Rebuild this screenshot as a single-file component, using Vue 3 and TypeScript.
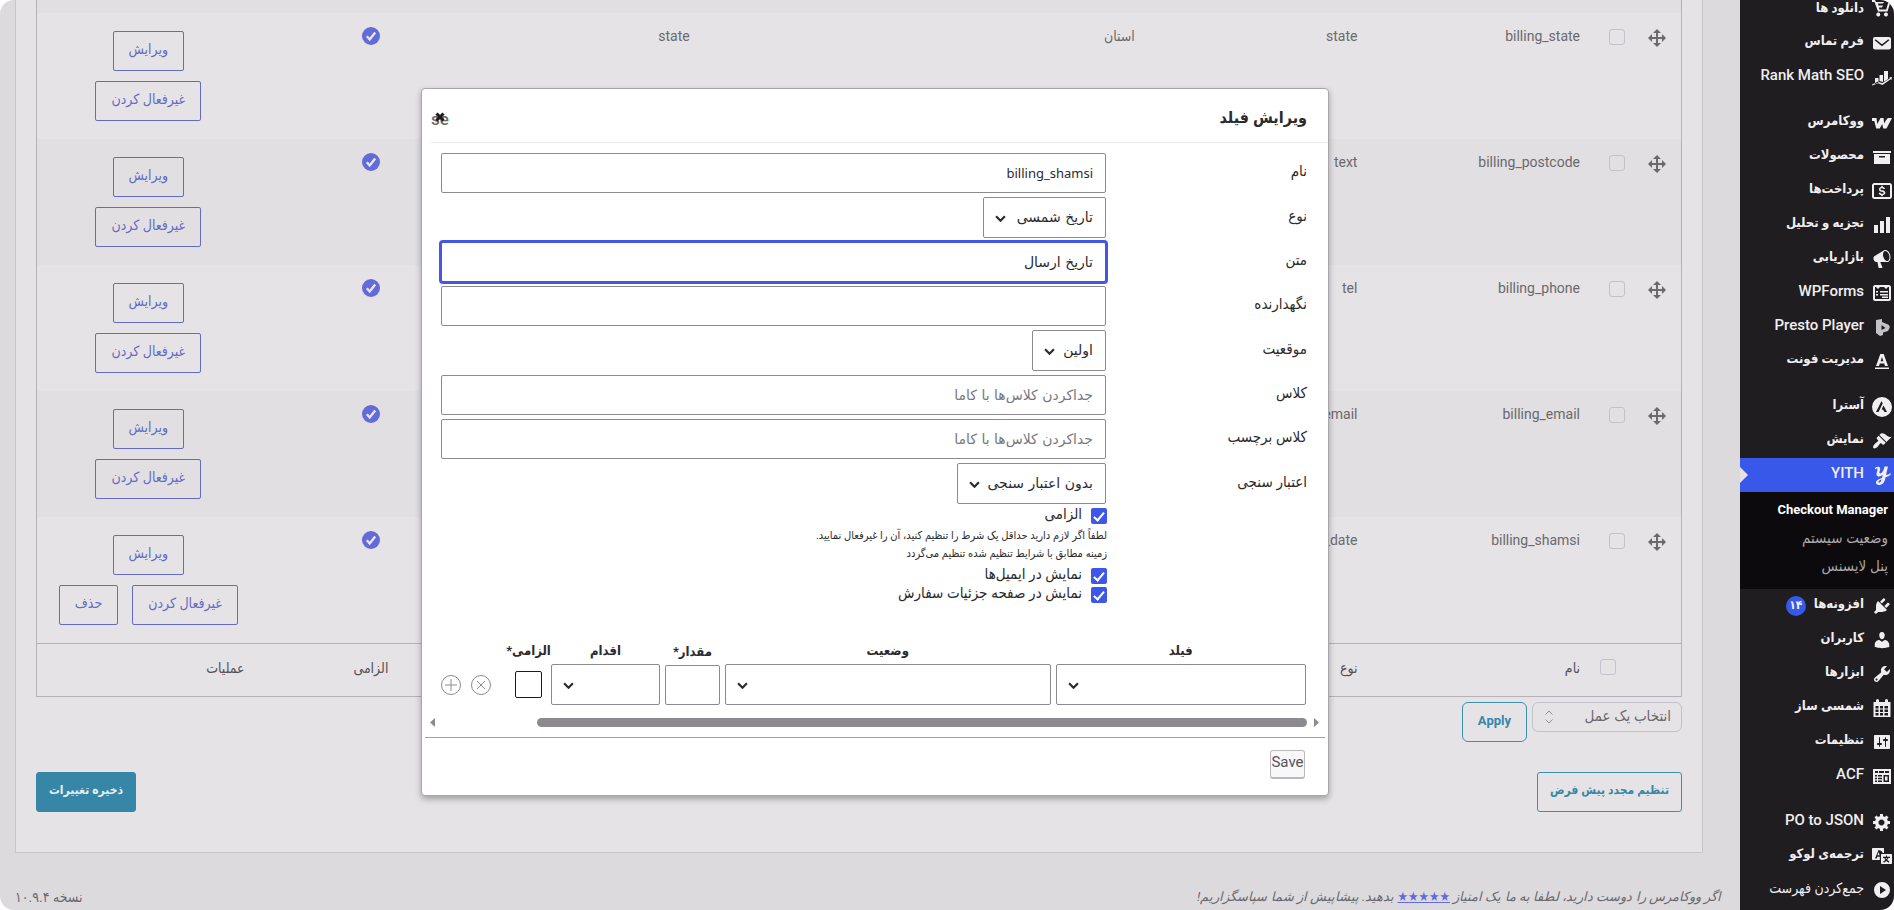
<script setup lang="ts">
import { ref } from 'vue'

interface MenuItem {
  label: string
  icon: string
  gapBefore?: boolean
  active?: boolean
  latin?: boolean
  badge?: string
}

interface FieldRow {
  name: string
  type: string
  label?: string
  className?: string
  removable?: boolean
}

const menuTop: MenuItem[] = [
  { label: 'دانلود ها', icon: 'cart' },
  { label: 'فرم تماس', icon: 'mail' },
  { label: 'Rank Math SEO', icon: 'rank', latin: true },
  { label: 'ووکامرس', icon: 'woo', gapBefore: true },
  { label: 'محصولات', icon: 'archive' },
  { label: 'پرداخت‌ها', icon: 'money' },
  { label: 'تجزیه و تحلیل', icon: 'bars' },
  { label: 'بازاریابی', icon: 'megaphone' },
  { label: 'WPForms', icon: 'form', latin: true },
  { label: 'Presto Player', icon: 'presto', latin: true },
  { label: 'مدیریت فونت', icon: 'font' },
  { label: 'آسترا', icon: 'astra', gapBefore: true },
  { label: 'نمایش', icon: 'brush' },
  { label: 'YITH', icon: 'yith', active: true, latin: true },
]

const subMenu: string[] = ['Checkout Manager', 'وضعیت سیستم', 'پنل لایسنس']

const menuBottom: MenuItem[] = [
  { label: 'افزونه‌ها', icon: 'plug', badge: '۱۴' },
  { label: 'کاربران', icon: 'user' },
  { label: 'ابزارها', icon: 'tools' },
  { label: 'شمسی ساز', icon: 'calendar' },
  { label: 'تنظیمات', icon: 'sliders' },
  { label: 'ACF', icon: 'acf', latin: true },
  { label: 'PO to JSON', icon: 'gear', gapBefore: true, latin: true },
  { label: 'ترجمه‌ی لوکو', icon: 'translate' },
  { label: 'جمع‌کردن فهرست', icon: 'play' },
]

/* 20x20 outlines; the even-odd rule cuts the inner shapes out */
const icons: Record<string, string> = {
  cart: 'M0 1h3l1 2h8l-1 1.500H6l.4 2H11L10 8.500H7l.4 2h6.800L17 1h3v2h-1.500L15.500 12.500H6L2.500 3H0zM5.800 13.500a2 2 0 1 1 0 3.900 2 2 0 0 1 0-3.900zM13.500 13.500a2 2 0 1 1 0 3.900 2 2 0 0 1 0-3.900z',
  mail: 'M3 4h14c1.100 0 2 .9 2 2v8.500c0 1.100-.9 2-2 2H3c-1.100 0-2-.9-2-2V6c0-1.100.9-2 2-2zM3.600 6.200l-1 1.100L10 13.300l7.400-6-1-1.100L10 11.300z',
  rank: 'M3 11h3.500v4.500L3 17zM7.500 8H11v7l-3.500-1zM12 4h4v8l-4 2.500zM0 17.500l6-3 4 1.700 8-5-1-.7 3-.5-.6 3-.8-.8-8.200 5.800-4.200-1.700L0 18.500z',
  woo: 'M0 5h4.500l.8 6L8.500 5h3l.7 5.500C13.500 8 14.500 6 16 5h4l-5.500 10.500h-3.300l-1-4.500-2.500 4.500H4.200L2.300 8H0z',
  archive: 'M1 4h18v2H1zM2 7h16v10H2zM7 9v1.500h6V9z',
  money: 'M2.500 2h15C19 2 20 3 20 4.500v11c0 1.500-1 2.500-2.500 2.500h-15C1 18 0 17 0 15.500v-11C0 3 1 2 2.500 2zM2 4v12h16V4zM9.200 4.800h1.600v1.100c1.200.2 2 .8 2.300 1.900l-1.500.5c-.3-.7-.8-1-1.600-1-1 0-1.500.4-1.500.9 0 .7.600.8 1.900 1.100 1.900.4 2.900 1.100 2.900 2.500 0 1.300-.9 2.100-2.500 2.400v1.100H9.200v-1.100c-1.400-.3-2.300-1-2.600-2.200l1.600-.5c.3.900.9 1.300 1.900 1.300s1.500-.3 1.500-.9c0-.7-.6-.8-1.900-1.100C7.800 10.400 7 9.700 7 8.500c0-1.300.8-2.200 2.200-2.500z',
  bars: 'M2 10h4v8H2zM8 6h4v12H8zM14 2h4v16h-4z',
  megaphone:
    'M18.150 5.940c.46 1.620.38 3.220-.02 4.480-.42 1.280-1.260 2.180-2.300 2.480-.16.060-.26.060-.4.060-.06.020-.12.020-.18.020-.06.020-.14.020-.22.020h-6.800l2.220 5.500c.02.140-.06.260-.14.340-.08.100-.24.160-.34.160H6.950c-.1 0-.26-.06-.34-.16-.08-.08-.16-.2-.14-.34l-1-5.500H4.250l-.02-.02c-.5.060-1.080-.18-1.540-.62s-.88-1.080-1.060-1.880c-.24-.8-.2-1.560-.02-2.200.18-.62.580-1.080 1.060-1.300l.02-.02 9-5.400c.1-.06.180-.1.240-.16.060-.04.140-.08.240-.12.160-.08.280-.12.500-.18 1.040-.3 2.240.1 3.220.98s1.840 2.240 2.260 3.860zm-2.580 5.980h-.02c.4-.1.740-.34 1.040-.7.580-.7.860-1.760.860-3.040 0-.64-.1-1.300-.28-1.980-.34-1.360-1.020-2.500-1.780-3.240s-1.680-1.100-2.460-.88c-.82.220-1.400.960-1.700 2-.32 1.040-.28 2.360.06 3.720.38 1.360 1 2.500 1.800 3.240.78.740 1.620 1.100 2.480.88z',
  form: 'M3 2h14c1 0 2 1 2 2v12c0 1-1 2-2 2H3c-1 0-2-1-2-2V4c0-1 1-2 2-2zM3 4v12h14V4h-1l-2 2-2-2h-4L6 6 4 4zM4 8h2v1.500H4zM8 8h8v1.500H8zM4 11h2v1.500H4zM8 11h8v1.500H8zM10 13.500h6V15h-6z',
  presto: 'M4 3l6-1v3l6 2.500c1.500.8 2 2 1.500 3.500L16 14l-5 1.500V18l-3 1-4-3zM9.500 8v5l4-2z',
  font: 'M8.300 3h3.400l4.300 12h-3l-.8-2.500H7.800L7 15H4zM10 6l-1.400 4.300h2.800zM3 16.500h14V18H3z',
  astra: 'M10 0a10 10 0 1 1 0 20 10 10 0 0 1 0-20zM9.500 4L4 15h2.500l4.200-8.500zM11.500 8.500l-1.800 3.700 1.600.8L12.500 15H15z',
  brush:
    'M14.480 11.060L7.410 3.990l1.500-1.500c.5-.56 2.300-.47 3.510.32 1.210.8 1.430 1.280 2.910 2.100 1.180.64 2.450 1.260 4.450.85zm-.71.710L6.700 4.700 4.930 6.470c-.39.390-.39 1.020 0 1.410l1.060 1.060c.39.390.390 1.030 0 1.420-.6.600-1.430 1.110-2.210 1.690-.35.260-.7.530-1.010.840C1.430 14.230.400 16.080 1.400 17.070c.99 1 2.840-.03 4.180-1.360.31-.31.580-.66.850-1.020.57-.78 1.080-1.610 1.690-2.210.39-.39 1.020-.39 1.410 0l1.060 1.060c.39.390 1.020.390 1.410 0z',
  yith: 'M3 3c2-2 5-1.500 5.200.5C8.400 5 7 7 7.500 8c.5 1.200 3-.5 4-3l1-3.500h3.500L14 10l3-.8 1.500-1.200.3 1.500-2.300 1.800-3 1C13 16.500 11 20 7.500 20 4 20 3 17.500 5 15.500c1.300-1.200 3-2 5-2.500l.7-3.200c-2 2.200-5.700 2.500-6.200-.3C4.200 7.500 6 5 5.500 3.800 5 3 4 3.500 3 4.500zM9.500 14.500c-2 .7-3.300 1.700-3 2.800.3 1 2.300.5 3-2.800z',
  plug: 'M13.110 4.360L9.870 7.600 8 5.730l3.240-3.240c.35-.34 1.050-.2 1.560.32.520.51.660 1.210.31 1.550zm-8 1.770l.91-1.120 9.010 9.010-1.190.840c-.71.710-2.630 1.160-3.820 1.160H6.140L4.900 17.260c-.59.590-1.540.590-2.120 0-.59-.58-.59-1.530 0-2.120l1.240-1.240v-3.880c0-1.130.400-3.190 1.090-3.890zm7.260 3.970l3.240-3.240c.34-.35 1.040-.21 1.550.31.520.51.660 1.210.31 1.550l-3.240 3.250z',
  user: 'M10 9.250c-2.270 0-2.730-3.440-2.730-3.440C7 4.020 7.820 2 9.970 2c2.160 0 2.980 2.020 2.710 3.810 0 0-.41 3.440-2.680 3.440zm0 2.570L12.720 10c2.390 0 4.520 2.330 4.520 4.530v2.490s-3.650 1.130-7.240 1.130c-3.650 0-7.240-1.130-7.240-1.130v-2.490c0-2.250 1.940-4.480 4.470-4.480z',
  tools: 'M16.680 9.770c-1.340 1.340-3.300 1.670-4.950.99l-5.410 6.520c-.99.990-2.590.990-3.580 0s-.99-2.590 0-3.570l6.520-5.420c-.68-1.650-.35-3.610.99-4.950 1.280-1.280 3.120-1.620 4.720-1.060l-2.890 2.890 2.820 2.820 2.860-2.870c.53 1.580.18 3.390-1.080 4.650zM3.810 16.210c.4.390 1.040.390 1.430 0 .4-.4.400-1.040 0-1.430-.39-.4-1.030-.4-1.430 0-.39.390-.39 1.030 0 1.430z',
  calendar:
    'M2 4h2V2.500a1.500 1.500 0 0 1 3 0V4h6V2.500a1.500 1.500 0 0 1 3 0V4h2.500v15h-17V4zM3.500 8v2.500h3V8zM8 8v2.500h3V8zM12.500 8v2.500h3.500V8zM3.500 11.500V14h3v-2.500zM8 11.500V14h3v-2.500zM12.500 11.500V14H16v-2.500zM3.500 15v2.500h3V15zM8 15v2.500h3V15zM12.500 15v2.500H16V15z',
  sliders:
    'M18 16V4c0-.55-.45-1-1-1H3c-.55 0-1 .45-1 1v12c0 .55.450 1 1 1h14c.55 0 1-.45 1-1zM8 11h1c.55 0 1 .45 1 1s-.45 1-1 1H8v1.500c0 .28-.22.500-.5.500s-.5-.22-.5-.5V13H6c-.55 0-1-.45-1-1s.45-1 1-1h1V5.500c0-.28.220-.5.500-.5s.5.220.5.500V11zm5-2h-1c-.55 0-1-.45-1-1s.45-1 1-1h1V5.500c0-.28.220-.5.500-.5s.5.220.5.500V7h1c.55 0 1 .45 1 1s-.45 1-1 1h-1v5.500c0 .28-.22.500-.5.500s-.5-.22-.5-.5V9z',
  acf: 'M1 3h18v15H1zM3 5v2h3V5zM7 5v2h5V5zM13 5v2h4V5zM3 9v1.500h2V9zM6 9v1.500h4V9zM3 11.800v1.500h2v-1.500zM6 11.800v1.500h4v-1.500zM3 14.500V16h2v-1.500zM6 14.500V16h4v-1.500zM11.500 9v7H17V9zM13 10.500h2.500v4H13z',
  gear: 'M18 12h-2.180c-.17.700-.44 1.350-.81 1.930l1.540 1.540-2.100 2.100-1.540-1.540c-.58.360-1.230.630-1.910.790V19H8v-2.180c-.68-.16-1.330-.43-1.910-.79l-1.540 1.540-2.120-2.120 1.540-1.540c-.36-.58-.63-1.230-.79-1.910H1V9.030h2.170c.16-.7.440-1.350.8-1.940L2.430 5.550l2.100-2.100 1.540 1.540c.58-.37 1.240-.64 1.930-.81V2h3v2.180c.68.160 1.330.430 1.910.79l1.540-1.540 2.120 2.120-1.540 1.540c.36.590.640 1.240.8 1.940H18V12zm-8.500 1.500c1.660 0 3-1.340 3-3s-1.340-3-3-3-3 1.340-3 3 1.340 3 3 3z',
  translate:
    'M1 2h11v5h-1.500V6L8.500 4.500 6.500 4 3 12.500h1.700l.6-1.800h2.500V14H1c-.6 0-1-.4-1-1V3c0-.6.400-1 1-1zM6.500 6l1.200 3.200H5.500zM10 8h9c.6 0 1 .4 1 1v8c0 .6-.4 1-1 1h-9c-.6 0-1-.4-1-1V9c0-.6.400-1 1-1zM14 9.500v1.200h-3V12h1.200l1.200 2-2.200 1.500.7 1.200 2.400-1.700 2.400 1.700.7-1.200L15.200 14l1.200-2H18v-1.300h-3V9.500zM13.600 12h1.600l-.8 1.200z',
  play: 'M10 2a8 8 0 1 1 0 16 8 8 0 0 1 0-16zM8 6v8l6-4z',
}

const rows: FieldRow[] = [
  { name: 'billing_state', type: 'state', label: 'استان', className: 'state' },
  { name: 'billing_postcode', type: 'text' },
  { name: 'billing_phone', type: 'tel' },
  { name: 'billing_email', type: 'email' },
  { name: 'billing_shamsi', type: 'jalali_date', removable: true },
]

const fieldName = ref('billing_shamsi')
const fieldText = ref('تاریخ ارسال')
const placeholderText = ref('')
const cssClass = ref('')
const labelClass = ref('')
const isRequired = ref(true)
const showInEmails = ref(true)
const showInOrder = ref(true)
const conditionValue = ref('')
const conditionRequired = ref(false)
</script>

<template>
  <div class="app" dir="rtl">
    <aside class="sidebar">
      <nav class="menu">
        <a
          v-for="item in menuTop"
          :key="item.label"
          href="#"
          class="menu-item"
          :class="{ gap: item.gapBefore, active: item.active, latin: item.latin }"
        >
          <svg class="menu-icon" :class="item.icon" viewBox="0 0 20 20"><path :d="icons[item.icon]" fill-rule="evenodd" /></svg>
          <span>{{ item.label }}</span>
        </a>
        <div class="submenu">
          <a v-for="(sub, i) in subMenu" :key="sub" href="#" :class="{ current: i === 0 }">{{ sub }}</a>
        </div>
        <a
          v-for="item in menuBottom"
          :key="item.label"
          href="#"
          class="menu-item"
          :class="{ gap: item.gapBefore, latin: item.latin, collapse: item.icon === 'play' }"
        >
          <svg class="menu-icon" :class="item.icon" viewBox="0 0 20 20"><path :d="icons[item.icon]" fill-rule="evenodd" /></svg>
          <span>{{ item.label }}</span>
          <span v-if="item.badge" class="badge">{{ item.badge }}</span>
        </a>
      </nav>
    </aside>

    <main class="main">
      <section class="panel">
        <table class="fields">
          <colgroup>
            <col class="col-move" />
            <col class="col-check" />
            <col v-for="n in 7" :key="n" />
          </colgroup>
          <tbody>
            <tr class="previous"><td colspan="9"></td></tr>
            <tr v-for="row in rows" :key="row.name">
              <td class="center move">
                <svg viewBox="0 0 20 20"><path d="M19 10l-4 4v-3h-4v4h3l-4 4-4-4h3v-4H5v3l-4-4 4-4v3h4V5H6l4-4 4 4h-3v4h4V6z" /></svg>
              </td>
              <td class="pick-cell"><input type="checkbox" class="pick" :aria-label="row.name" /></td>
              <td>{{ row.name }}</td>
              <td>{{ row.type }}</td>
              <td>{{ row.label }}</td>
              <td></td>
              <td>{{ row.className }}</td>
              <td class="center status">
                <svg viewBox="0 0 18 18">
                  <circle cx="9" cy="9" r="9" fill="#636bd8" />
                  <path d="M4.800 9.300l2.900 3.200 5.500-7" fill="none" stroke="#e8e6ec" stroke-width="2.400" />
                </svg>
              </td>
              <td class="actions">
                <div class="action-line"><button type="button" class="outline">ویرایش</button></div>
                <div class="action-line">
                  <button type="button" class="outline">غیرفعال کردن</button>
                  <button v-if="row.removable" type="button" class="outline">حذف</button>
                </div>
              </td>
            </tr>
          </tbody>
          <tfoot>
            <tr>
              <th colspan="2" class="pick-all"><input type="checkbox" class="pick" aria-label="همه" /></th>
              <th>نام</th>
              <th>نوع</th>
              <th></th>
              <th></th>
              <th></th>
              <th class="center">الزامی</th>
              <th>عملیات</th>
            </tr>
          </tfoot>
        </table>

        <div class="bulk">
          <div class="bulk-select">
            <select aria-label="انتخاب یک عمل"><option>انتخاب یک عمل</option></select>
            <svg viewBox="0 0 10 14"><path d="M1.500 4.500L5 1l3.500 3.500M1.500 9.500L5 13l3.500-3.500" /></svg>
          </div>
          <button type="button" class="teal apply">Apply</button>
        </div>

        <div class="panel-actions">
          <button type="button" class="teal">تنظیم مجدد پیش فرض</button>
          <button type="button" class="teal solid">ذخیره تغییرات</button>
        </div>
      </section>

      <footer class="page-footer">
        <p class="thanks">
          اگر <strong>ووکامرس</strong> را دوست دارید، لطفا به ما یک امتیاز <a href="#">★★★★★</a> بدهید. پیشاپیش از شما سپاسگزاریم!
        </p>
        <p>نسخه ۱۰.۹.۴</p>
      </footer>
    </main>

    <div class="overlay">
      <div class="dialog" role="dialog" aria-labelledby="dialog-title">
        <header class="dialog-head">
          <h2 id="dialog-title">ویرایش فیلد</h2>
          <button type="button" class="close">
            <span>se</span>
            <svg viewBox="0 0 10 10"><path d="M1.500 1.500l7 7M8.500 1.500l-7 7" /></svg>
          </button>
        </header>

        <form class="dialog-form" @submit.prevent>
          <div class="form-row">
            <label for="f-name">نام</label>
            <div class="control"><input id="f-name" v-model="fieldName" type="text" class="latin" /></div>
          </div>
          <div class="form-row">
            <label for="f-type">نوع</label>
            <div class="control">
              <div class="select type">
                <select id="f-type"><option>تاریخ شمسی</option></select>
                <svg viewBox="0 0 10 6"><path d="M1 1l4 4 4-4" /></svg>
              </div>
            </div>
          </div>
          <div class="form-row">
            <label for="f-text">متن</label>
            <div class="control"><input id="f-text" v-model="fieldText" type="text" class="focused" /></div>
          </div>
          <div class="form-row">
            <label for="f-placeholder">نگهدارنده</label>
            <div class="control"><input id="f-placeholder" v-model="placeholderText" type="text" /></div>
          </div>
          <div class="form-row">
            <label for="f-position">موقعیت</label>
            <div class="control">
              <div class="select position">
                <select id="f-position"><option>اولین</option></select>
                <svg viewBox="0 0 10 6"><path d="M1 1l4 4 4-4" /></svg>
              </div>
            </div>
          </div>
          <div class="form-row">
            <label for="f-class">کلاس</label>
            <div class="control"><input id="f-class" v-model="cssClass" type="text" placeholder="جداکردن کلاس‌ها با کاما" /></div>
          </div>
          <div class="form-row">
            <label for="f-label-class">کلاس برچسب</label>
            <div class="control"><input id="f-label-class" v-model="labelClass" type="text" placeholder="جداکردن کلاس‌ها با کاما" /></div>
          </div>
          <div class="form-row">
            <label for="f-validation">اعتبار سنجی</label>
            <div class="control">
              <div class="select validation">
                <select id="f-validation"><option>بدون اعتبار سنجی</option></select>
                <svg viewBox="0 0 10 6"><path d="M1 1l4 4 4-4" /></svg>
              </div>
            </div>
          </div>

          <div class="checks">
            <label class="check"><input v-model="isRequired" type="checkbox" /><span>الزامی</span></label>
            <p class="hint">
              لطفاً اگر لازم دارید حداقل یک شرط را تنظیم کنید، آن را غیرفعال نمایید.<br />زمینه مطابق با شرایط تنظیم شده تنظیم می‌گردد
            </p>
            <label class="check"><input v-model="showInEmails" type="checkbox" /><span>نمایش در ایمیل‌ها</span></label>
            <label class="check"><input v-model="showInOrder" type="checkbox" /><span>نمایش در صفحه جزئیات سفارش</span></label>
          </div>

          <div class="conditions">
            <div class="condition">
              <label for="c-field">فیلد</label>
              <div class="select">
                <select id="c-field"><option></option></select>
                <svg viewBox="0 0 10 6"><path d="M1 1l4 4 4-4" /></svg>
              </div>
            </div>
            <div class="condition">
              <label for="c-status">وضعیت</label>
              <div class="select">
                <select id="c-status"><option></option></select>
                <svg viewBox="0 0 10 6"><path d="M1 1l4 4 4-4" /></svg>
              </div>
            </div>
            <div class="condition">
              <label for="c-value">مقدار*</label>
              <input id="c-value" v-model="conditionValue" type="text" />
            </div>
            <div class="condition">
              <label for="c-action">اقدام</label>
              <div class="select">
                <select id="c-action"><option></option></select>
                <svg viewBox="0 0 10 6"><path d="M1 1l4 4 4-4" /></svg>
              </div>
            </div>
            <div class="condition">
              <label for="c-required">الزامی*</label>
              <div class="box-slot"><input id="c-required" v-model="conditionRequired" type="checkbox" class="box" /></div>
            </div>
            <div class="condition-buttons">
              <button type="button" aria-label="حذف شرط">
                <svg viewBox="0 0 20 20"><circle cx="10" cy="10" r="9.500" /><path d="M6 6l8 8M14 6l-8 8" /></svg>
              </button>
              <button type="button" aria-label="افزودن شرط">
                <svg viewBox="0 0 20 20"><circle cx="10" cy="10" r="9.500" /><path d="M4 10h12M10 4v12" /></svg>
              </button>
            </div>
          </div>
        </form>

        <div class="scrollbar">
          <svg class="arrow" viewBox="0 0 5 9"><path d="M0 0l5 4.500L0 9z" /></svg>
          <div class="track"><div class="thumb"></div></div>
          <svg class="arrow" viewBox="0 0 5 9"><path d="M5 0L0 4.500 5 9z" /></svg>
        </div>

        <footer class="dialog-foot">
          <button type="button" class="save">Save</button>
        </footer>
      </div>
    </div>
  </div>
</template>

<style>
body {
  margin: 0;
  background: #fff;
}
</style>

<style scoped>
.app {
  position: relative;
  display: flex;
  height: 100vh;
  overflow: hidden;
  border-radius: 14px;
  background: #dcdadd;
  color: #6b696d;
  font-family: Roboto, 'DejaVu Sans Condensed', 'DejaVu Sans', sans-serif;
  font-size: 14px;
}

*,
*::before,
*::after {
  box-sizing: border-box;
}

button,
input,
select {
  font: inherit;
  margin: 0;
}

/* sidebar */
.sidebar {
  flex: 0 0 154px;
  background: #1f1d20;
  color: #f0eef1;
}

.menu {
  display: flex;
  flex-direction: column;
}

.menu-item {
  position: relative;
  display: flex;
  align-items: center;
  gap: 8px;
  height: 34px;
  padding-right: 2px;
  color: #f0eef1;
  font-size: 13px;
  font-weight: 700;
  text-decoration: none;
  white-space: nowrap;
}

.menu-item.latin {
  font-size: 15px;
  font-weight: 500;
}

.menu-item:first-child {
  height: 26px;
  padding-bottom: 9px;
}

.menu-item span {
  line-height: 18px;
  padding-bottom: 5px;
}

.menu-item:first-child span {
  padding-bottom: 1px;
  line-height: 16px;
}

.menu-item.gap {
  margin-top: 12px;
}

.menu-item.active {
  background: #3858e9;
}

.menu-item.active::after {
  content: '';
  position: absolute;
  left: 0;
  border: 8px solid transparent;
  border-left-color: #e5e3e6;
  border-right-width: 0;
}

.menu-item.collapse {
  font-size: 14px;
  font-weight: 400;
}

.menu-icon {
  flex: none;
  width: 20px;
  height: 20px;
  fill: #f0eef1;
}

.menu-icon.presto {
  fill: #c4c2c6;
}

.menu-item .badge {
  width: 20px;
  height: 20px;
  padding: 0;
  border-radius: 50%;
  background: #3858e9;
  font-size: 12px;
  line-height: 19px;
  text-align: center;
}

.submenu {
  display: flex;
  flex-direction: column;
  height: 97px;
  padding: 4px 6px 0 0;
  background: #0c0a0d;
}

.submenu a {
  color: #a9a7ab;
  font-size: 15px;
  line-height: 28px;
  text-decoration: none;
  white-space: nowrap;
}

.submenu .current {
  color: #fff;
  font-size: 13px;
  font-weight: 700;
}

/* page */
.main {
  flex: 1;
  display: flex;
  flex-direction: column;
  min-width: 0;
}

.panel {
  margin: 0 37px 0 15px;
  padding: 0 20px 40px;
  border: 1px solid #c8c6ca;
  border-top: 0;
  background: #e5e3e6;
}

.fields {
  width: 100%;
  table-layout: fixed;
  border: 1px solid #b4b2b6;
  border-top: 0;
  border-collapse: separate;
  border-spacing: 0;
}

.col-move {
  width: 49px;
}

.col-check {
  width: 37px;
}

.fields td {
  height: 126px;
  padding: 5px 15px 18px;
  line-height: 36px;
  text-align: right;
  vertical-align: top;
}

.fields tbody tr:nth-child(odd) td {
  background: #e1dfe2;
}

.fields .actions {
  padding-top: 18px;
}

.fields .previous td {
  height: 13px;
  padding: 0;
}

.fields .center {
  padding-right: 0;
  padding-left: 0;
  text-align: center;
}

.fields .move svg {
  width: 20px;
  height: 20px;
  margin-top: 10px;
  fill: #6b696d;
}

.fields .move,
.fields .status {
  line-height: 0;
}

.fields .status svg {
  width: 18px;
  height: 18px;
  margin-top: 9px;
}

.fields .pick-cell {
  padding-right: 7px;
  padding-left: 0;
}

.pick {
  appearance: none;
  width: 16px;
  height: 16px;
  border: 1px solid #c2c2cc;
  border-radius: 3px;
  background: transparent;
  vertical-align: middle;
}

.actions .action-line {
  display: flex;
  justify-content: center;
  gap: 14px;
  line-height: 20px;
}

.actions .action-line + .action-line {
  margin-top: 10px;
}

.outline {
  height: 40px;
  padding: 0 15px 4px;
  border: 1px solid #636bc4;
  border-radius: 2px;
  background: transparent;
  color: #636bc4;
  white-space: nowrap;
}

.fields th {
  height: 53px;
  padding: 0 15px 4px;
  border-top: 1px solid #b4b2b6;
  color: #525055;
  font-weight: 400;
  text-align: right;
}

.fields .pick-all {
  padding: 0 0 8px 5px;
  text-align: left;
}

.bulk {
  display: flex;
  align-items: flex-start;
  gap: 5px;
  margin-top: 5px;
}

.bulk-select {
  position: relative;
  width: 150px;
}

.bulk-select select {
  appearance: none;
  width: 100%;
  height: 30px;
  padding: 0 10px 3px;
  border: 1px solid #c2c2cc;
  border-radius: 6px;
  background: transparent;
  color: #6b696d;
  font-size: 15px;
}

.bulk-select svg {
  position: absolute;
  top: 8px;
  left: 12px;
  width: 10px;
  height: 14px;
  fill: none;
  stroke: #929096;
}

.teal {
  height: 40px;
  padding: 0 12px 4px;
  border: 1px solid #3b8fb0;
  border-radius: 3px;
  background: transparent;
  color: #3588a8;
  font-size: 12px;
  font-weight: 700;
  white-space: nowrap;
}

.teal.apply {
  padding: 0 15px 4px;
  border-radius: 6px;
  font-size: 13px;
}

.teal.solid {
  border-color: #3686a7;
  background: #3686a7;
  color: #e5eef2;
}

.panel-actions {
  display: flex;
  justify-content: space-between;
  margin-top: 30px;
}

.page-footer {
  display: flex;
  justify-content: space-between;
  padding: 32px 19px 0 15px;
  line-height: 24px;
}

.page-footer p {
  margin: 0;
}

.page-footer .thanks {
  font-size: 13px;
  font-style: italic;
}

.thanks strong {
  font-weight: 500;
}

.thanks a {
  color: #636bd8;
}

/* dialog */
.overlay {
  position: absolute;
  inset: 0;
  display: grid;
  grid-template-columns: 565fr 908fr 421fr;
  align-items: start;
  padding-top: 88px;
}

.dialog {
  grid-column: 2;
  border: 1px solid #a8a6aa;
  border-radius: 4px;
  background: #fff;
  box-shadow: 0 3px 6px rgba(0, 0, 0, 0.3);
  color: #2b2a2d;
}

.dialog-head {
  display: flex;
  align-items: center;
  justify-content: space-between;
  height: 54px;
  margin-left: 8px;
  padding-right: 21px;
  border-bottom: 1px solid #ebebed;
}

.dialog-head h2 {
  margin: 0;
  padding-top: 3px;
  font-size: 16px;
  font-weight: 700;
}

.close {
  position: relative;
  width: 20px;
  height: 20px;
  margin-top: 6px;
  padding: 0;
  border: 0;
  background: none;
  color: #6b696d;
  font-size: 17px;
  font-weight: 500;
  line-height: 20px;
  text-align: center;
}

.close svg {
  position: absolute;
  top: 3px;
  left: 5px;
  width: 10px;
  height: 10px;
  fill: none;
  stroke: #1b1a1d;
  stroke-width: 3;
}

.dialog-form {
  display: flex;
  flex-direction: column;
  gap: 4px;
  padding: 10px 21px 0 19px;
}

.form-row {
  display: flex;
  align-items: center;
}

.form-row label {
  flex: 0 0 201px;
  padding-bottom: 4px;
  font-size: 15px;
  font-weight: 500;
}

.control {
  flex: 1;
}

.dialog-form input[type='text'],
.select select {
  display: block;
  width: 100%;
  height: 40px;
  padding: 0 12px;
  border: 1px solid #8c8a8e;
  border-radius: 2px;
  background: #fff;
  color: #2b2a2d;
  font-family: 'DejaVu Sans', sans-serif;
  font-size: 14px;
  outline: 0;
}

.dialog-form input.latin {
  font-family: 'Noto Sans', sans-serif;
  font-size: 13px;
}

.dialog-form input::placeholder {
  color: #7a787c;
  opacity: 1;
}

.dialog-form input.focused {
  border-color: #4257e6;
  box-shadow: 0 0 0 2px #4257e6;
}

.select {
  position: relative;
}

.select select {
  appearance: none;
  height: 41px;
  padding-bottom: 2px;
}

.select svg {
  position: absolute;
  top: 18px;
  left: 12px;
  width: 11px;
  height: 7px;
  fill: none;
  stroke: #2b2a2d;
  stroke-width: 2;
  pointer-events: none;
}

.select.type {
  width: 123px;
}

.select.position {
  width: 74px;
}

.select.validation {
  width: 149px;
}

.checks {
  display: flex;
  flex-direction: column;
  gap: 3px;
  margin-right: 200px;
}

.check {
  display: flex;
  align-items: center;
  gap: 9px;
  height: 16px;
  font-size: 15px;
  line-height: 16px;
}

.check span {
  padding-bottom: 4px;
}

.check input {
  appearance: none;
  display: grid;
  place-items: center;
  width: 16px;
  height: 16px;
  border-radius: 2px;
  background: #3f57e8;
}

.check input:checked::after {
  content: '';
  width: 6px;
  height: 11px;
  margin-bottom: 2px;
  border: solid #fff;
  border-width: 0 2px 2px 0;
  transform: rotate(40deg);
}

.hint {
  margin: 0;
  padding-bottom: 2px;
  font-size: 11px;
  line-height: 18px;
}

.conditions {
  display: grid;
  grid-template-columns: 250fr 325fr 55px 109px 35px 65px;
  gap: 5px;
  align-items: end;
  padding: 32px 1px 0 0;
}

.condition label {
  display: block;
  margin: 0 -10px;
  padding-bottom: 1px;
  font-size: 13px;
  font-weight: 700;
  line-height: 24px;
  text-align: center;
  white-space: nowrap;
}

.box-slot {
  display: grid;
  place-items: center;
  height: 41px;
}

.box {
  appearance: none;
  width: 27px;
  height: 27px;
  border: 1px solid #1b1a1d;
  border-radius: 2px;
}

.condition-buttons {
  display: flex;
  align-items: center;
  justify-content: flex-end;
  gap: 10px;
  height: 41px;
}

.condition-buttons button {
  width: 20px;
  height: 20px;
  padding: 0;
  border: 0;
  background: none;
}

.condition-buttons svg {
  display: block;
  width: 20px;
  height: 20px;
  fill: none;
  stroke: #8c8a8e;
}

.scrollbar {
  display: flex;
  align-items: center;
  gap: 7px;
  margin: 13px 9px 10px 8px;
}

.scrollbar .arrow {
  width: 5px;
  height: 9px;
  fill: #8c8a8e;
}

.track {
  flex: 1;
}

.thumb {
  width: 89%;
  height: 9px;
  border-radius: 5px;
  background: #8c8a8e;
}

.dialog-foot {
  margin: 0 3px;
  padding: 12px 20px 16px;
  border-top: 1px solid #a2a0a4;
}

.save {
  display: block;
  width: 35px;
  height: 29px;
  padding: 0 0 4px;
  border: 1px solid #bbb9bd;
  border-bottom-width: 2px;
  border-radius: 3px;
  background: #f8f7f9;
  color: #565459;
  font-size: 15px;
  text-align: center;
}
</style>
